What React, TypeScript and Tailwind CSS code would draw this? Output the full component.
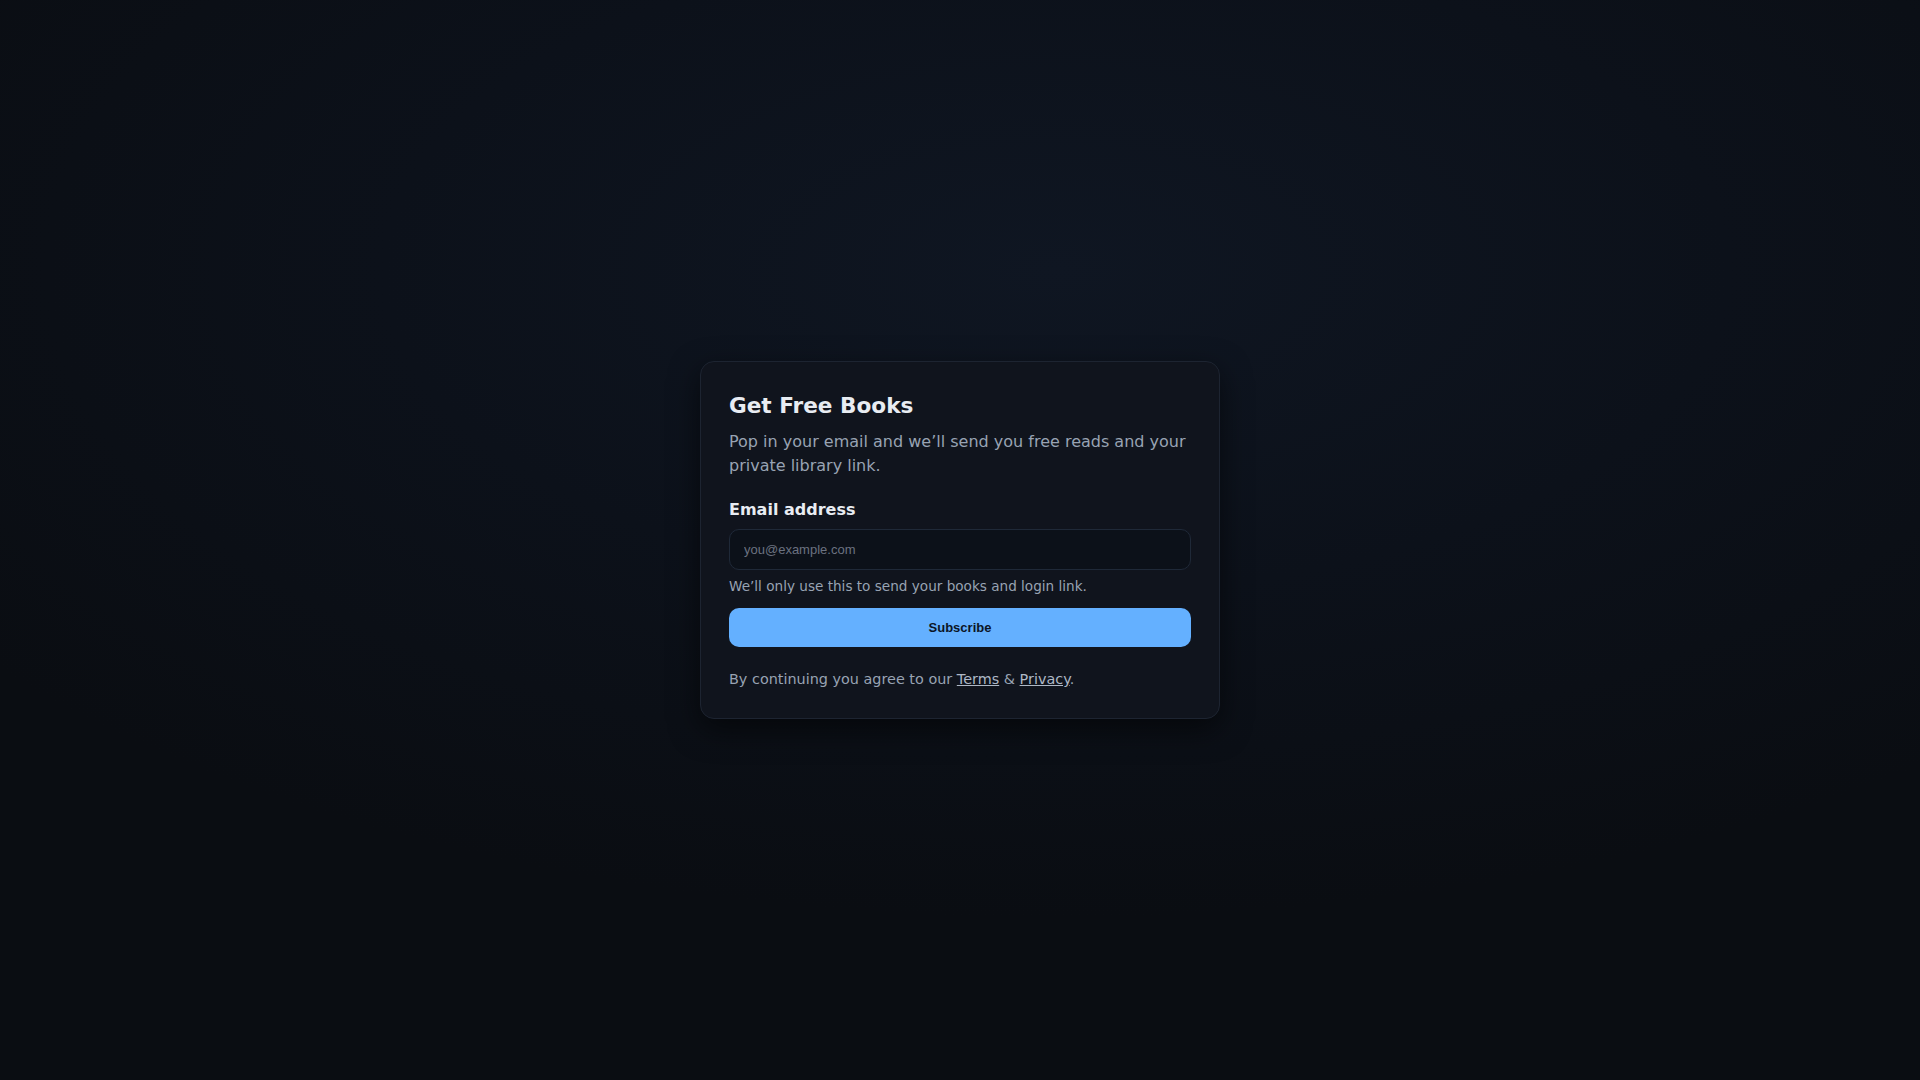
import React from "react";

export default function App() {
  return (
    <div
      className="min-h-screen w-full flex items-center justify-center bg-[#0a0d12]"
      style={{
        backgroundImage:
          "radial-gradient(ellipse 70% 60% at 55% 25%, #0f1622 0%, #0c111a 50%, #0a0d12 100%)",
      }}
    >
      <div
        className="w-[520px] rounded-[14px] border border-[#1d2431] bg-[#10141d] px-7 pt-[29px] pb-[29px] shadow-[0_10px_30px_rgba(0,0,0,0.55)]"
        style={{ fontFamily: '"DejaVu Sans", sans-serif' }}
      >
        <h1 className="text-[21.6px] font-bold leading-[29px] text-[#e8ecf2]">Get Free Books</h1>
        <p className="mt-[10px] text-[16px] leading-[24px] text-[#98a3b3]">
          Pop in your email and we’ll send you free reads and your private library link.
        </p>
        <label className="mt-[20px] block text-[16px] font-bold leading-[24px] text-[#e8ecf2]">
          Email address
        </label>
        <input
          type="email"
          placeholder="you@example.com"
          className="mt-[7px] block h-[41px] w-full rounded-[10px] border border-[#1f2938] bg-[#0c1119] px-[14px] text-[13px] text-[#e8ecf2] placeholder:text-[#6b7280] outline-none"
          style={{ fontFamily: '"Liberation Sans", Arial, sans-serif' }}
        />
        <p className="mt-[6px] text-[13.6px] leading-[20px] text-[#98a3b3]">
          We’ll only use this to send your books and login link.
        </p>
        <button
          className="mt-[12px] block h-[39px] w-full rounded-[10px] bg-[#64b0ff] text-[13px] font-bold text-[#0b1526]"
          style={{ fontFamily: '"Liberation Sans", Arial, sans-serif' }}
        >
          Subscribe
        </button>
        <p className="mt-[22px] text-[14.4px] leading-[20px] text-[#98a3b3]">
          By continuing you agree to our{" "}
          <a href="#" className="underline text-[#aeb8c6]">Terms</a> &amp;{" "}
          <a href="#" className="underline text-[#aeb8c6]">Privacy</a>.
        </p>
      </div>
    </div>
  );
}
